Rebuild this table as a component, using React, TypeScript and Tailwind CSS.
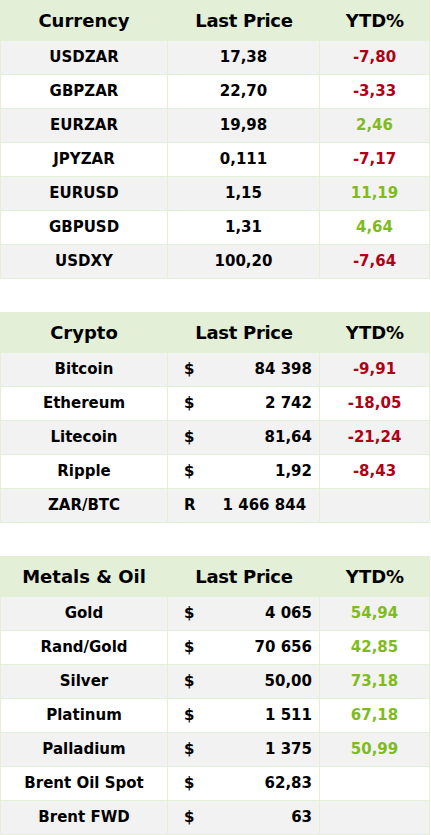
import React from "react";

type Row = { name: string; cur?: string; price: string; ytd?: string; tail?: boolean };

const currency: Row[] = [
  { name: "USDZAR", price: "17,38", ytd: "-7,80" },
  { name: "GBPZAR", price: "22,70", ytd: "-3,33" },
  { name: "EURZAR", price: "19,98", ytd: "2,46" },
  { name: "JPYZAR", price: "0,111", ytd: "-7,17" },
  { name: "EURUSD", price: "1,15", ytd: "11,19" },
  { name: "GBPUSD", price: "1,31", ytd: "4,64" },
  { name: "USDXY", price: "100,20", ytd: "-7,64" },
];

const crypto: Row[] = [
  { name: "Bitcoin", cur: "$", price: "84 398", ytd: "-9,91" },
  { name: "Ethereum", cur: "$", price: "2 742", ytd: "-18,05" },
  { name: "Litecoin", cur: "$", price: "81,64", ytd: "-21,24" },
  { name: "Ripple", cur: "$", price: "1,92", ytd: "-8,43" },
  { name: "ZAR/BTC", cur: "R", price: "1 466 844", tail: true },
];

const metals: Row[] = [
  { name: "Gold", cur: "$", price: "4 065", ytd: "54,94" },
  { name: "Rand/Gold", cur: "$", price: "70 656", ytd: "42,85" },
  { name: "Silver", cur: "$", price: "50,00", ytd: "73,18" },
  { name: "Platinum", cur: "$", price: "1 511", ytd: "67,18" },
  { name: "Palladium", cur: "$", price: "1 375", ytd: "50,99" },
  { name: "Brent Oil Spot", cur: "$", price: "62,83" },
  { name: "Brent FWD", cur: "$", price: "63" },
];

function Table({ title, rows }: { title: string; rows: Row[] }) {
  return (
    <div className="w-[430px]">
      <div className="grid h-[40px] grid-cols-[168px_152px_110px] items-center bg-[#e3efd7] text-[18px] font-bold text-black">
        <div className="text-center">{title}</div>
        <div className="text-center tracking-[-0.3px]">Last Price</div>
        <div className="text-center">YTD%</div>
      </div>
      {rows.map((r, i) => {
        const bg = i % 2 === 0 ? "bg-[#f2f2f2]" : "bg-white";
        const neg = r.ytd?.startsWith("-");
        return (
          <div
            key={r.name}
            className={`grid h-[34px] grid-cols-[168px_152px_110px] border-t border-[#e3efd7] text-[15px] font-bold text-black ${bg}`}
          >
            <div className="flex items-center justify-center border-l border-r border-[#e3efd7]">{r.name}</div>
            <div className="flex items-center border-r border-[#e3efd7]">
              {r.cur ? (
                <>
                  <span className="pl-[16px]">{r.cur}</span>
                  <span className={r.tail ? "ml-[27px]" : "ml-auto pr-[7px]"}>{r.price}</span>
                </>
              ) : (
                <span className="w-full text-center">{r.price}</span>
              )}
            </div>
            <div
              className={`flex items-center justify-center border-r border-[#e3efd7] ${
                neg ? "text-[#b00016]" : "text-[#80bb1e]"
              }`}
            >
              {r.ytd}
            </div>
          </div>
        );
      })}
      <div className="h-px w-[430px] bg-[#e3efd7]" />
    </div>
  );
}

export default function App() {
  return (
    <div className="flex min-h-[835px] w-[431px] flex-col gap-[33px] bg-white font-['DejaVu_Sans',sans-serif]">
      <Table title="Currency" rows={currency} />
      <Table title="Crypto" rows={crypto} />
      <Table title="Metals & Oil" rows={metals} />
    </div>
  );
}
